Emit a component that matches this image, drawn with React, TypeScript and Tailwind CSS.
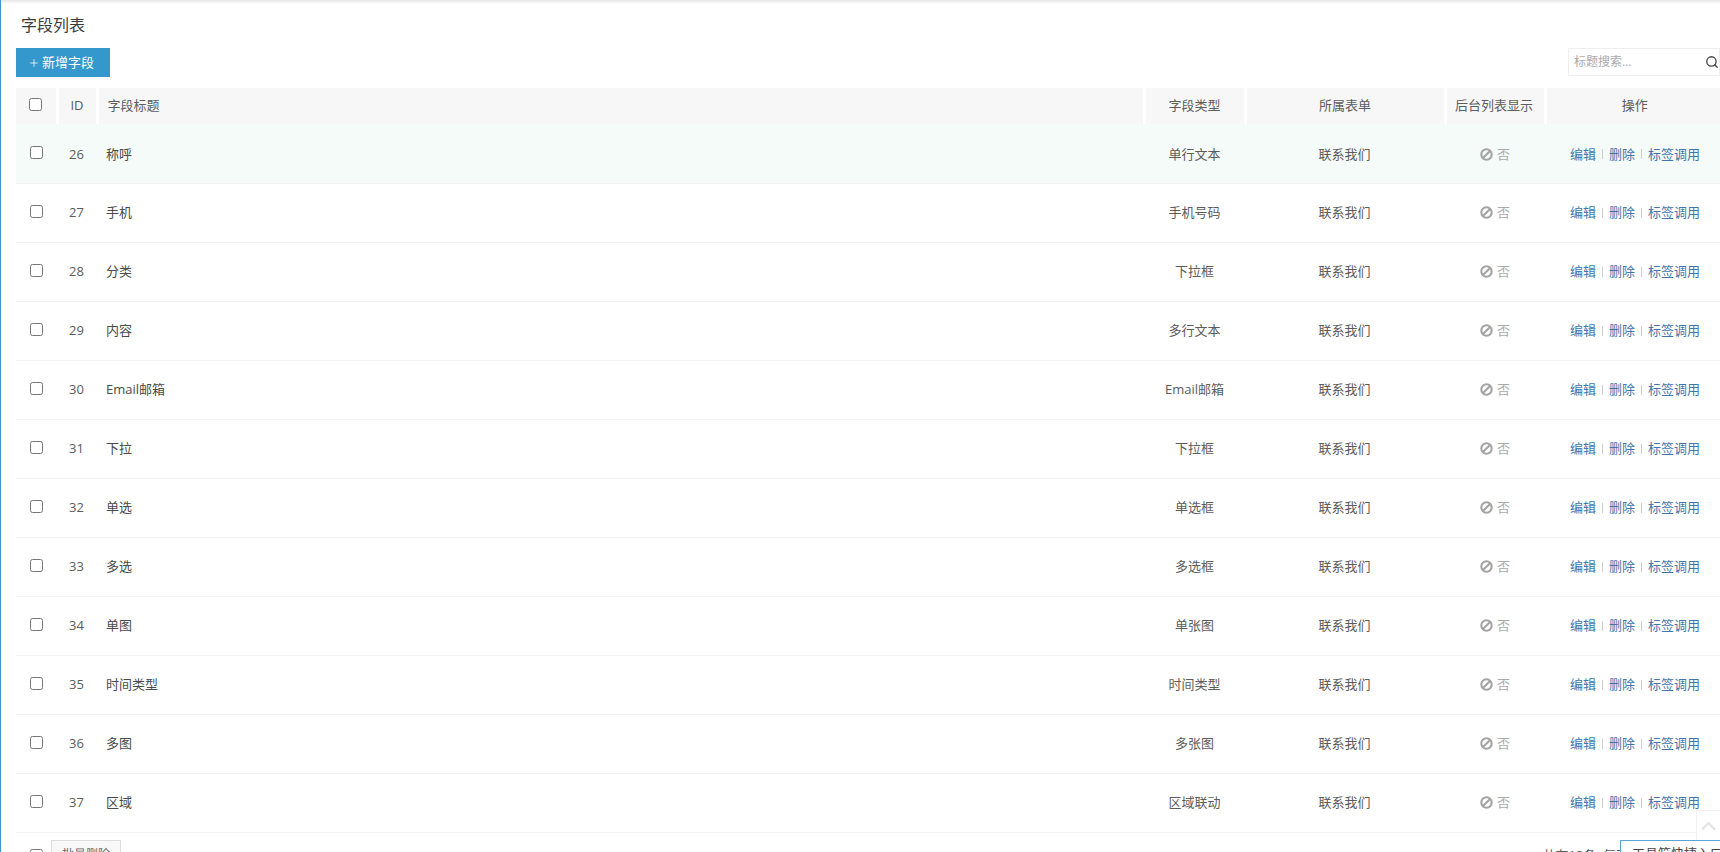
import { Search, ChevronUp, Plus } from "lucide-react";

const rows = [
  { id: 26, title: "称呼", type: "单行文本" },
  { id: 27, title: "手机", type: "手机号码" },
  { id: 28, title: "分类", type: "下拉框" },
  { id: 29, title: "内容", type: "多行文本" },
  { id: 30, title: "Email邮箱", type: "Email邮箱" },
  { id: 31, title: "下拉", type: "下拉框" },
  { id: 32, title: "单选", type: "单选框" },
  { id: 33, title: "多选", type: "多选框" },
  { id: 34, title: "单图", type: "单张图" },
  { id: 35, title: "时间类型", type: "时间类型" },
  { id: 36, title: "多图", type: "多张图" },
  { id: 37, title: "区域", type: "区域联动" },
];

const BanIcon = () => (
  <svg viewBox="0 0 14 14" className="w-[13px] h-[13px] mr-[4px] shrink-0" fill="none" stroke="#a3a3a3" strokeWidth="2.2">
    <circle cx="7" cy="7" r="5.6" />
    <path d="M3.2 10.8 10.8 3.2" />
  </svg>
);

const App = () => {
  return (
    <div
      className="relative h-[852px] w-[1720px] overflow-hidden bg-white border-l border-[#3c99cf] text-[13px] text-[#5c5c5c]"
      style={{ fontFamily: '"Open Sans", "Noto Sans CJK SC", sans-serif' }}
    >
      {/* top shadow */}
      <div className="h-[4px] bg-gradient-to-b from-[#e6e6e6] to-white" />

      <div className="pl-[15px]">
        <h1 className="pl-[5px] pt-[11px] h-[44px] text-base leading-5 font-normal text-[#3c3c3c]">字段列表</h1>

        {/* toolbar */}
        <div className="flex items-center justify-between h-[29px] mb-[11px]">
          <button className="h-[29px] w-[94px] flex items-center pl-[12px] bg-[#3598cc] text-white text-[13px]">
            <Plus className="w-[12px] h-[12px] mr-[2px]" strokeWidth={1.5} />
            新增字段
          </button>
          <div className="flex items-center w-[152px] h-[28px] border border-[#eeeeee] pl-[5px] -mt-[1px]">
            <span className="text-xs text-[#aaa] flex-1">标题搜索...</span>
            <Search className="w-[14px] h-[14px] text-[#444]" strokeWidth={2.25} />
          </div>
        </div>

        {/* table */}
        <table className="table-fixed border-collapse w-[1707px]">
          <colgroup>
            <col className="w-[41px]" />
            <col className="w-[40px]" />
            <col className="w-[1047px]" />
            <col className="w-[101px]" />
            <col className="w-[200px]" />
            <col className="w-[100px]" />
            <col className="w-[178px]" />
          </colgroup>
          <thead>
            <tr className="h-[36px] bg-[#f7f7f7]">
              <th className="border-r-[3px] border-white font-normal pl-[13px] text-left">
                <input type="checkbox" className="block w-[13px] h-[13px] -mt-[4px]" />
              </th>
              <th className="border-r-[3px] border-white font-normal">ID</th>
              <th className="border-r-[3px] border-white font-normal text-left pl-[9px]">字段标题</th>
              <th className="border-r-[3px] border-white font-normal">字段类型</th>
              <th className="border-r-[3px] border-white font-normal">所属表单</th>
              <th className="border-r-[3px] border-white font-normal pr-[2px]">后台列表显示</th>
              <th className="font-normal">操作</th>
            </tr>
          </thead>
          <tbody>
            {rows.map((row, i) => (
              <tr key={row.id} className={`h-[59px] border-b border-[#f2f2f2] ${i === 0 ? "bg-[#f4fbf8] [&>td]:pt-[2px]" : ""}`}>
                <td className="pl-[14px]">
                  <input type="checkbox" className="block w-[13px] h-[13px] -mt-[3px]" />
                </td>
                <td className="text-center pr-[1px]">{row.id}</td>
                <td className="pl-[9px] text-[#4a4a4a]">{row.title}</td>
                <td className="text-center">{row.type}</td>
                <td className="text-center pr-[1px]">联系我们</td>
                <td>
                  <div className="flex items-center justify-center text-[#aaa]">
                    <BanIcon />否
                  </div>
                </td>
                <td className="pl-[2px]">
                  <div className="flex items-center justify-center text-[#3f76ab]">
                    <a>编辑</a>
                    <span className="mx-[6px] h-[10px] w-px bg-[#ccc]" />
                    <a>删除</a>
                    <span className="mx-[6px] h-[10px] w-px bg-[#ccc]" />
                    <a>标签调用</a>
                  </div>
                </td>
              </tr>
            ))}
          </tbody>
        </table>

        {/* footer */}
        <div className="flex justify-between items-start pt-[7px]">
          <div className="flex items-start">
            <input type="checkbox" className="block w-[13px] h-[13px] ml-[14px] mt-[9px]" />
            <button className="ml-[8px] w-[70px] h-[30px] border border-[#ddd] bg-[#f8f8f8] text-xs text-[#666]">批量删除</button>
          </div>
          <span className="mr-[91px] mt-[6px] whitespace-nowrap">共有12条, 每页</span>
        </div>
      </div>

      {/* back to top */}
      <div className="absolute right-0 top-[810px] w-[24px] h-[30px] bg-white border-l border-t border-[#f0f0f0] flex items-center justify-center">
        <ChevronUp className="w-[24px] h-[24px] text-[#e5e5e5]" strokeWidth={2.5} />
      </div>

      {/* tool shortcut */}
      <div className="absolute left-[1619px] top-[840px] w-[102px] h-[30px] bg-white border border-[#5aa5d6] pl-[11px] pt-[3px] whitespace-nowrap text-[#444]">
        工具箱快捷入口
      </div>
    </div>
  );
};

export default App;
